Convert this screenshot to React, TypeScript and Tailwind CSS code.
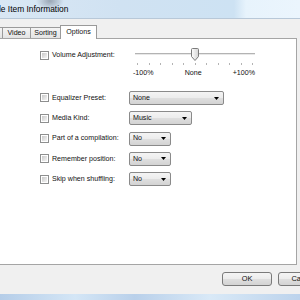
const Check = () => (
  <span className="w-[9px] h-[9px] border border-[#8e8f8f] bg-white p-px flex shrink-0">
    <span className="flex-1 bg-[linear-gradient(135deg,#c9c9c9,#f5f5f5)]" />
  </span>
);

const Combo = ({ value, w }: { value: string; w: string }) => (
  <div
    className={`${w} h-[14px] border border-[#8a8a8a] rounded-[2px] bg-[linear-gradient(#f4f4f4,#ececec_50%,#dfdfdf_50%,#d3d3d3)] flex items-center justify-between pl-[3px] pr-[4px]`}
  >
    <span>{value}</span>
    <svg width="5" height="3" viewBox="0 0 5 3">
      <path d="M0 0h5L2.5 3z" fill="#000" />
    </svg>
  </div>
);

const rows = [
  { label: "Equalizer Preset:", value: "None", w: "w-[95px]" },
  { label: "Media Kind:", value: "Music", w: "w-[63px]" },
  { label: "Part of a compilation:", value: "No", w: "w-[42px]" },
  { label: "Remember position:", value: "No", w: "w-[42px]" },
  { label: "Skip when shuffling:", value: "No", w: "w-[42px]" },
];

export default function App() {
  return (
    <div className="w-[300px] h-[300px] overflow-hidden bg-[#f0f0f0] font-['Liberation_Sans',Arial,sans-serif] text-[7.1px] text-[#111] flex flex-col">
      {/* title bar */}
      <div className="h-[19px] shrink-0 flex items-center border-b border-[#b8c8d8] bg-[radial-gradient(ellipse_14px_9px_at_50px_1px,rgba(95,105,118,0.5),transparent),linear-gradient(to_right,#d9e7f4,#d0e2f2_40%,#cde2f3_78%,#e7f3fc_82%,#ebf5fd)]">
        <span className="text-[8.4px] text-black -ml-[1px]">le Item Information</span>
      </div>

      {/* tabs */}
      <div className="h-[20px] shrink-0 flex items-end -mb-px">
        <div className="w-[3px] h-[12px] border-t border-r border-[#9a9a9a] bg-[linear-gradient(#f4f4f4,#e2e2e2)]" />
        <div className="w-[28px] h-[12px] border-t border-r border-[#9a9a9a] bg-[linear-gradient(#f4f4f4,#e2e2e2)] flex items-center justify-center">
          Video
        </div>
        <div className="w-[30px] h-[12px] border-t border-r border-[#9a9a9a] bg-[linear-gradient(#f4f4f4,#e2e2e2)] flex items-center justify-center">
          Sorting
        </div>
        <div className="relative z-10 -ml-px w-[37px] h-[14px] border-t border-l border-r border-[#9a9a9a] bg-white flex items-center justify-center pb-[1px]">
          Options
        </div>
      </div>

      {/* panel */}
      <div className="h-[227px] shrink-0 mr-[3px] bg-white border-t border-b border-r border-[#a5a5a5] pl-[40px] pt-[9px] flex flex-col">
        <div className="h-[43px] shrink-0 flex items-start">
          <div className="w-[89px] h-[14px] flex items-center gap-[3px]">
            <Check />
            <span>Volume Adjustment:</span>
          </div>
          <div className="ml-[4px] w-[124px] flex flex-col">
            <div className="relative h-[12px] flex items-center px-[2px]">
              <div className="flex-1 h-[3px] border-t border-[#b3b3b3] bg-[#e8e8e8] border-b border-b-white" />
              <svg className="absolute left-[58px] top-0" width="8" height="13" viewBox="0 0 8 13">
                <defs>
                  <linearGradient id="tg" x1="0" x2="1">
                    <stop offset="0" stopColor="#fdfdfd" />
                    <stop offset="1" stopColor="#d4d4d4" />
                  </linearGradient>
                </defs>
                <path
                  d="M0.5 1.5Q0.5 0.5 1.5 0.5H6.5Q7.5 0.5 7.5 1.5V8.5L4 12.5L0.5 8.5Z"
                  fill="url(#tg)"
                  stroke="#7b7b7b"
                />
              </svg>
            </div>
            <div className="mt-[3px] h-[2px] flex justify-between px-[4px]">
              {Array.from({ length: 11 }).map((_, i) => (
                <span key={i} className="w-px h-[2px] bg-[#b4b4b4]" />
              ))}
            </div>
            <div className="mt-[4px] flex justify-between pr-[2px] leading-[9px]">
              <span>-100%</span>
              <span>None</span>
              <span>+100%</span>
            </div>
          </div>
        </div>

        <div className="flex flex-col gap-[6.3px]">
          {rows.map((r) => (
            <div key={r.label} className="h-[14px] flex items-center">
              <div className="w-[89px] flex items-center gap-[3px]">
                <Check />
                <span>{r.label}</span>
              </div>
              <Combo value={r.value} w={r.w} />
            </div>
          ))}
        </div>
      </div>

      {/* footer */}
      <div className="h-[29px] shrink-0 pt-[7px] pl-[222px] flex items-start gap-[6px]">
        <button className="w-[50px] h-[14px] shrink-0 border border-[#7a7a7a] rounded-[3px] bg-[linear-gradient(#f4f4f4,#ececec_50%,#dfdfdf_50%,#d3d3d3)] text-[7.4px] leading-none">
          OK
        </button>
        <button className="w-[50px] h-[14px] shrink-0 border border-[#7a7a7a] rounded-[3px] bg-[linear-gradient(#f4f4f4,#ececec_50%,#dfdfdf_50%,#d3d3d3)] text-[7.4px] leading-none">
          Cancel
        </button>
      </div>

      {/* window frame */}
      <div className="flex-1 bg-[linear-gradient(to_right,#b5cde8,#d4e6f6_25%,#b9d0ea_45%,#d9e9f7_70%,#bcd3ec)]" />
    </div>
  );
}
